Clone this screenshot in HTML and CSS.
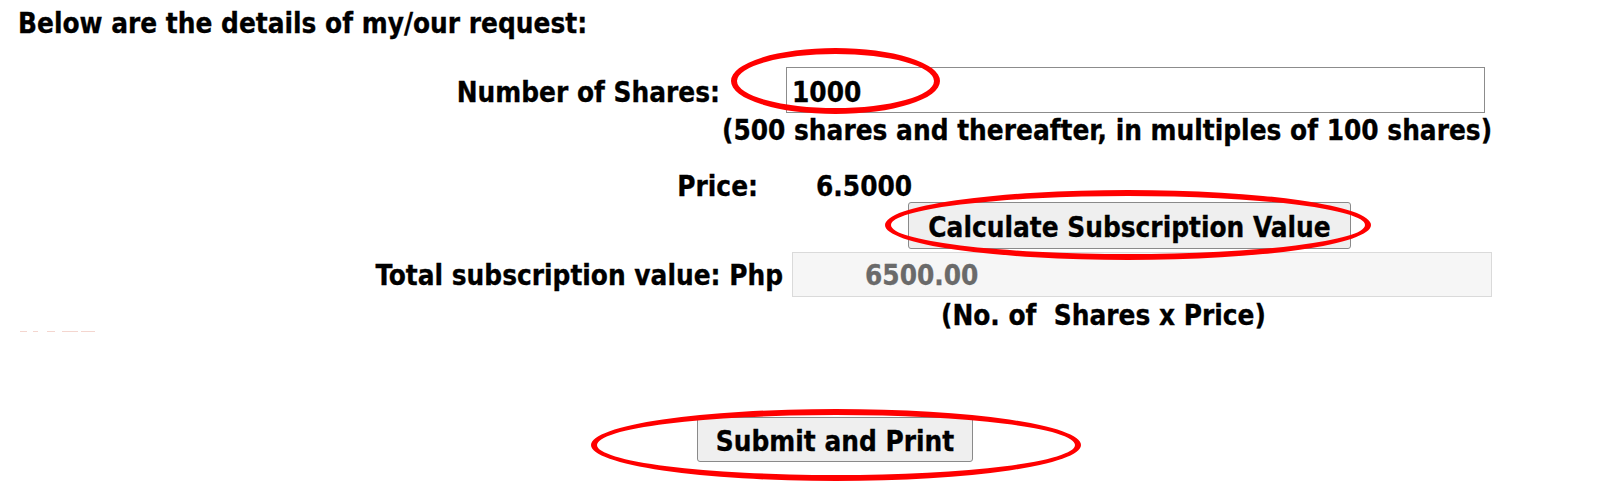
FILE: index.html
```html
<!DOCTYPE html>
<html lang="en">
<head>
<meta charset="utf-8">
<title>Subscription request</title>
<link rel="stylesheet" href="styles.css">
</head>
<body>
<div class="page">
  <h1 class="heading">Below are the details of my/our request:</h1>

  <div class="row row-shares">
    <label class="lbl lbl-shares" for="shares">Number of Shares:</label>
    <input id="shares" class="field field-shares" type="text" value="1000">
  </div>

  <div class="hint">(500 shares and thereafter, in multiples of 100 shares)</div>

  <div class="row row-price">
    <span class="lbl lbl-price">Price:</span>
    <span class="price-val">6.5000</span>
  </div>

  <div class="row row-calc">
    <button class="btn btn-calc" type="button">Calculate Subscription Value</button>
  </div>

  <div class="row row-total">
    <label class="lbl lbl-total" for="total">Total subscription value: Php</label>
    <input id="total" class="field field-total" type="text" value="6500.00" readonly>
  </div>

  <div class="row row-formula">
    <span class="ghost"></span>
    <span class="formula">(No. of&nbsp; Shares x Price)</span>
  </div>

  <div class="row row-submit">
    <button class="btn btn-submit" type="button">Submit and Print</button>
  </div>

  <span class="ring ring-shares"></span>
  <span class="ring ring-calc"></span>
  <span class="ring ring-submit"></span>
</div>
</body>
</html>
```

FILE: styles.css
```css
html, body {
  margin: 0;
  padding: 0;
  background: #ffffff;
}

body {
  font-family: "DejaVu Sans Condensed", "DejaVu Sans", sans-serif;
  font-stretch: condensed;
  font-weight: bold;
  font-size: 27.7px;
  line-height: 32px;
  color: #000000;
  -webkit-text-stroke: 0.3px currentColor;
}

.page {
  position: relative;
  padding-top: 8px;
  min-height: 486px;
}

.heading {
  margin: 0;
  padding-left: 18px;
  font-size: 27.7px;
  line-height: 32px;
  font-weight: bold;
}

.row {
  display: flex;
}

.lbl {
  display: block;
  flex: none;
  text-align: right;
}

.field {
  box-sizing: border-box;
  flex: none;
  margin: 0;
  font: inherit;
  line-height: 32px;
  outline: none;
}

.btn {
  box-sizing: border-box;
  margin: 0;
  font: inherit;
  line-height: 32px;
  color: #000000;
  background: #efefef;
  border: 1px solid #8a8a8a;
  border-radius: 3px;
}

/* Number of shares */
.row-shares {
  margin-top: 27px;
  align-items: baseline;
}

.lbl-shares {
  width: 720px;
}

.field-shares {
  margin-left: 66px;
  width: 699px;
  height: 46px;
  padding: 4px 4px 0 5px;
  border: 1px solid #8c8c8c;
  background: #ffffff;
  color: #000000;
}

.hint {
  margin-top: 2px;
  padding-left: 722px;
  white-space: nowrap;
}

/* Price */
.row-price {
  margin-top: 25px;
  line-height: 30px;
}

.lbl-price {
  width: 758px;
}

.price-val {
  margin-left: 58px;
}

/* Calculate */
.row-calc {
  padding-left: 908px;
}

.btn-calc {
  width: 443px;
  height: 47px;
  padding: 5px 0 0;
}

/* Total */
.row-total {
  margin-top: 3px;
  align-items: baseline;
}

.lbl-total {
  width: 783px;
  white-space: nowrap;
}

.field-total {
  margin-left: 9px;
  width: 700px;
  height: 45px;
  padding: 2px 4px 0 72px;
  border: 1px solid #dadada;
  background: #f6f6f6;
  color: #6a6a6a;
}

/* Formula */
.row-formula {
  margin-top: 3px;
}

.ghost {
  align-self: flex-end;
  flex: none;
  margin-left: 20px;
  width: 75px;
  height: 1px;
  background: linear-gradient(to right,
    #f4d6cf 0, #f4d6cf 7px, transparent 7px, transparent 13px,
    #f4d6cf 13px, #f4d6cf 18px, transparent 18px, transparent 27px,
    #f4d6cf 27px, #f4d6cf 35px, transparent 35px, transparent 42px,
    #f4d6cf 42px, #f4d6cf 58px, transparent 58px, transparent 61px,
    #f4d6cf 61px, #f4d6cf 75px);
}

.formula {
  margin-left: 846px;
  white-space: nowrap;
}

/* Submit */
.row-submit {
  margin-top: 85px;
  padding-left: 697px;
}

.btn-submit {
  width: 276px;
  height: 45px;
  padding: 5px 0 0;
}

/* Annotation rings */
.ring {
  position: absolute;
  box-sizing: border-box;
  border: 6px solid #ff0000;
  border-radius: 50%;
  pointer-events: none;
}

.ring-shares {
  left: 731px;
  top: 48px;
  width: 209px;
  height: 66px;
}

.ring-calc {
  left: 885px;
  top: 190px;
  width: 486px;
  height: 70px;
}

.ring-submit {
  left: 591px;
  top: 409px;
  width: 490px;
  height: 72px;
}
```
